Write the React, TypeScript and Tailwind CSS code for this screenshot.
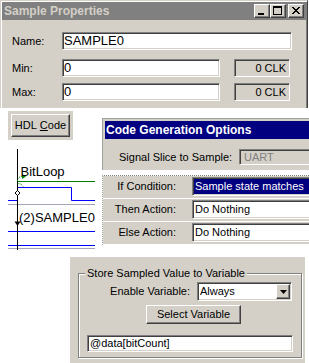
import React from 'react';

const sunken =
  'border border-t-[#808080] border-l-[#808080] border-b-white border-r-white shadow-[inset_1px_1px_0_#404040,inset_-1px_-1px_0_#d4d0c8]';
const raised =
  'border border-t-white border-l-white border-b-[#404040] border-r-[#404040] shadow-[inset_-1px_-1px_0_#808080]';

function TitleButton({ children, className = '' }: { children: React.ReactNode; className?: string }) {
  return (
    <div className={`w-[16px] h-[14px] bg-[#d4d0c8] flex items-center justify-center ${raised} ${className}`}>
      {children}
    </div>
  );
}

function SampleProperties() {
  return (
    <div className="w-[308px] h-[108px] bg-[#d4d0c8] border-t border-l border-r border-t-[#d4d0c8] border-l-[#d4d0c8] border-r-[#404040] shadow-[inset_1px_1px_0_#ffffff,inset_-1px_0_0_#808080] pt-[1px] px-[1px]">
      <div className="h-[18px] bg-[#808080] flex items-center justify-between pl-[2px] pr-[2px]">
        <span className="text-[12px] font-bold text-[#d4d0c8] leading-none">Sample Properties</span>
        <div className="flex items-center">
          <TitleButton>
            <svg width="14" height="12" className="block">
              <rect x="3" y="8" width="6" height="2" fill="#000" />
            </svg>
          </TitleButton>
          <TitleButton>
            <svg width="14" height="12" className="block">
              <rect x="2.5" y="1.5" width="8" height="8" fill="none" stroke="#000" />
              <rect x="2" y="1" width="9" height="2" fill="#000" />
            </svg>
          </TitleButton>
          <TitleButton className="ml-[2px]">
            <svg width="14" height="12" className="block">
              <path d="M3,2 L10,9 M4,2 L11,9 M10,2 L3,9 M11,2 L4,9" stroke="#000" strokeWidth="1" />
            </svg>
          </TitleButton>
        </div>
      </div>
      <div className="pl-[10px] pt-[12px] text-[11px]">
        <div className="flex items-center h-[18px]">
          <span className="w-[50px]">Name:</span>
          <div className={`w-[230px] h-[18px] bg-white ${sunken} flex items-center pl-[1px] text-[13px]`}>SAMPLE0</div>
        </div>
        <div className="flex items-center h-[18px] mt-[9px]">
          <span className="w-[50px]">Min:</span>
          <div className={`w-[158px] h-[18px] bg-white ${sunken} flex items-center pl-[1px] text-[13px]`}>0</div>
          <div className={`ml-[14px] w-[56px] h-[18px] ${sunken} flex items-center justify-end pr-[3px]`}>0 CLK</div>
        </div>
        <div className="flex items-center h-[18px] mt-[6px]">
          <span className="w-[50px]">Max:</span>
          <div className={`w-[158px] h-[18px] bg-white ${sunken} flex items-center pl-[1px] text-[13px]`}>0</div>
          <div className={`ml-[14px] w-[56px] h-[18px] ${sunken} flex items-center justify-end pr-[3px]`}>0 CLK</div>
        </div>
      </div>
    </div>
  );
}

function Waveform() {
  return (
    <svg width="87" height="105" className="block mt-[5px]" fontFamily="'Liberation Sans', Arial, sans-serif">
      <line x1="0" y1="55.5" x2="9" y2="55.5" stroke="#0000ff" />
      <line x1="0" y1="59.5" x2="87" y2="59.5" stroke="#a4a4bc" />
      <line x1="0" y1="86.5" x2="87" y2="86.5" stroke="#0000ff" />
      <line x1="0" y1="100.5" x2="87" y2="100.5" stroke="#0000ff" />
      <line x1="0" y1="103.5" x2="87" y2="103.5" stroke="#a4a4bc" />
      <line x1="9.5" y1="36.5" x2="87" y2="36.5" stroke="#008000" />
      <polyline points="9.5,42.5 63.5,42.5 63.5,55.5 87,55.5" fill="none" stroke="#0000ff" />
      <line x1="9.5" y1="4" x2="9.5" y2="105" stroke="#000" />
      <path d="M9.5,36 C9.5,33 11,31.5 15,31.5" stroke="#008000" strokeDasharray="1 1" fill="none" />
      <polygon points="18,31.5 14,29 14,34" fill="#008000" />
      <path d="M9.5,38.5 C12,38.5 14,39.5 15,41.5" stroke="#008000" strokeDasharray="1 1" fill="none" />
      <polygon points="9.5,45.5 12,48 9.5,50.5 7,48" fill="#fff" stroke="#000" />
      <polygon points="6.5,76.5 12.5,76.5 9.5,81" fill="#000" />
      <text x="12.5" y="31" fontSize="13" fill="#000">BitLoop</text>
      <text x="11" y="77" fontSize="13" fill="#000">(2)SAMPLE0</text>
    </svg>
  );
}

function CodeGenOptions() {
  const rows = [
    { label: 'If Condition:', value: 'Sample state matches', selected: true },
    { label: 'Then Action:', value: 'Do Nothing', selected: false },
    { label: 'Else Action:', value: 'Do Nothing', selected: false },
  ];
  return (
    <div className="w-[207px] shrink-0 pt-[10px] overflow-hidden">
      <div className="bg-[#d4d0c8] border-t border-l border-[#a0a0a0] pl-[2px] pt-[2px]">
        <div className="h-[18px] bg-[#000080] text-white font-bold text-[12px] flex items-center pl-[1px]">
          Code Generation Options
        </div>
        <div className="h-[31px] pt-[10px]">
          <div className="flex items-center h-[16px] pl-[14px]">
            <span className="w-[120px] shrink-0">Signal Slice to Sample:</span>
            <div className={`w-[80px] shrink-0 h-[16px] ${sunken} border-r-0 flex items-center pl-[4px] text-[#808080]`}>
              UART
            </div>
          </div>
        </div>
      </div>
      <div className="mt-[5px] border-t border-dotted border-t-[#808080] border-l border-l-[#a0a0a0]">
        {rows.map((r) => (
          <div key={r.label} className="h-[23px] bg-[#d4d0c8] border-b border-b-white flex items-start">
            <div className="w-[89px] shrink-0 h-[19px] mt-[1px] flex items-center justify-end pr-[16px]">{r.label}</div>
            <div className={`w-[130px] shrink-0 h-[19px] mt-[1px] bg-white ${sunken} border-r-0 flex items-center pl-[1px]`}>
              {r.selected ? (
                <span className="bg-[#000080] text-white pl-[1px] pr-[5px] leading-[15px]">{r.value}</span>
              ) : (
                <span className="pl-[1px]">{r.value}</span>
              )}
            </div>
          </div>
        ))}
      </div>
    </div>
  );
}

function StoreVariable() {
  return (
    <div className="ml-[70px] w-[235px] h-[106px] bg-[#d4d0c8] pl-[8px] pt-[16px]">
      <div className="relative w-[224px] h-[85px] border border-[#808080] shadow-[inset_1px_1px_0_#ffffff,1px_1px_0_#ffffff]">
        <span className="absolute left-[6px] top-[-8px] px-[2px] bg-[#d4d0c8] leading-[14px]">
          Store Sampled Value to Variable
        </span>
        <div className="flex items-center justify-end pr-[9px] mt-[8px]">
          <span className="mr-[7px]">Enable Variable:</span>
          <div className={`w-[95px] h-[19px] bg-white ${sunken} flex items-center justify-between pl-[2px] pr-[1px]`}>
            <span>Always</span>
            <div className={`w-[14px] h-[15px] bg-[#d4d0c8] ${raised} flex items-center justify-center`}>
              <svg width="7" height="4" className="block">
                <polygon points="0,0 7,0 3.5,4" fill="#000" />
              </svg>
            </div>
          </div>
        </div>
        <div
          className={`ml-[67px] mt-[4px] w-[95px] h-[19px] bg-[#d4d0c8] ${raised} flex items-center justify-center`}
        >
          Select Variable
        </div>
        <div className={`ml-[8px] mt-[11px] w-[206px] h-[17px] bg-white ${sunken} flex items-center pl-[2px]`}>
          @data[bitCount]
        </div>
      </div>
    </div>
  );
}

export default function App() {
  return (
    <div className="w-[309px] h-[363px] bg-white overflow-hidden text-[11px] text-black font-['Liberation_Sans',Arial,sans-serif]">
      <SampleProperties />
      <div className="flex h-[149px]">
        <div className="w-[102px] shrink-0 pl-[8px] pt-[3px]">
          <div className="w-[65px] h-[29px] bg-[#d4d0c8] p-[3px]">
            <div className={`w-full h-full ${raised} flex items-center justify-center`}>
              HDL <span className="underline ml-[3px]">C</span>ode
            </div>
          </div>
          <Waveform />
        </div>
        <CodeGenOptions />
      </div>
      <StoreVariable />
    </div>
  );
}
